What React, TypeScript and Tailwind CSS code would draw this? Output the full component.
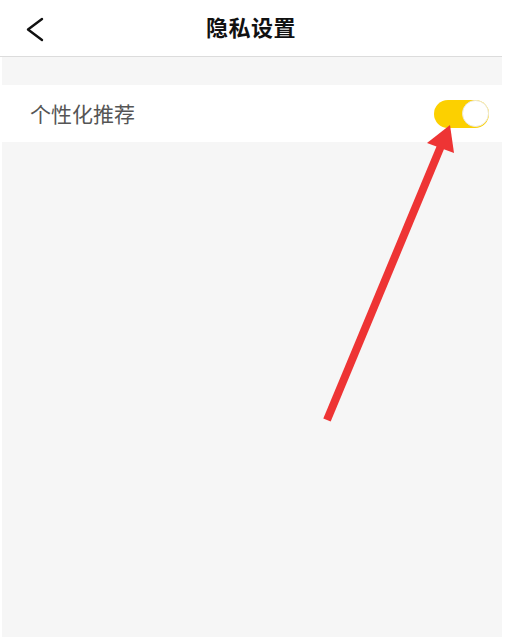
import React from "react";

export default function App() {
  return (
    <div className="relative w-[514px] h-[638px] bg-white overflow-hidden" style={{ fontFamily: '"Noto Sans CJK SC", "Noto Sans", sans-serif' }}>
      <div className="w-[502px] h-[637px] flex flex-col">
        <div className="relative h-[57px] border-b border-[#dcdcdc] flex items-center justify-center shrink-0">
          <svg className="absolute left-[24px] top-[17px]" width="22" height="26" viewBox="0 0 22 26" fill="none">
            <path d="M18 2 L4 12.5 L18 23" stroke="#111" strokeWidth="2.4" strokeLinecap="round" strokeLinejoin="round" />
          </svg>
          <span className="text-[22px] font-bold text-[#111] tracking-[0.5px] leading-none mb-[4px]">隐私设置</span>
        </div>
        <div className="ml-[2px] flex-1 bg-[#f6f6f6] flex flex-col">
          <div className="h-[28px]" />
          <div className="h-[57px] bg-white flex items-center justify-between pl-[28px] pr-[13px]">
            <span className="text-[21px] text-[#555] leading-none">个性化推荐</span>
            <div className="w-[55px] h-[28px] rounded-full bg-[#fcd000] flex items-center justify-end">
              <div className="w-[27px] h-[27px] rounded-full bg-white border border-[#ece9d8]" />
            </div>
          </div>
        </div>
      </div>
      <svg className="absolute left-0 top-0 pointer-events-none" width="514" height="638" viewBox="0 0 514 638">
        <line x1="441" y1="146" x2="327" y2="420" stroke="#ee3434" strokeWidth="8" />
        <polygon points="450,125 427,143 454,153" fill="#ee3434" />
      </svg>
    </div>
  );
}
